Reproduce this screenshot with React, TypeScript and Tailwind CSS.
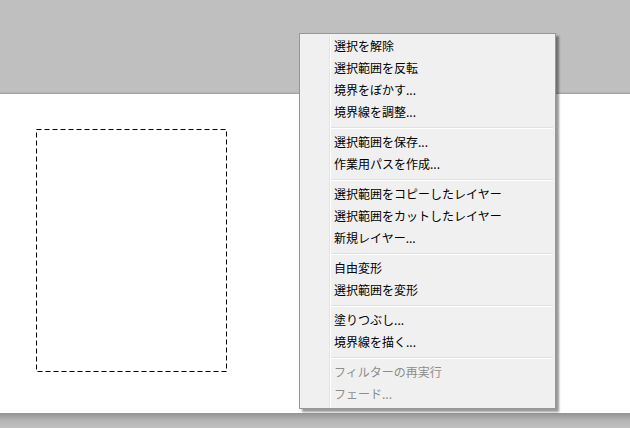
import React from "react";

type Item = { label: string; disabled?: boolean };

const groups: Item[][] = [
  [
    { label: "選択を解除" },
    { label: "選択範囲を反転" },
    { label: "境界をぼかす..." },
    { label: "境界線を調整..." },
  ],
  [{ label: "選択範囲を保存..." }, { label: "作業用パスを作成..." }],
  [
    { label: "選択範囲をコピーしたレイヤー" },
    { label: "選択範囲をカットしたレイヤー" },
    { label: "新規レイヤー..." },
  ],
  [{ label: "自由変形" }, { label: "選択範囲を変形" }],
  [{ label: "塗りつぶし..." }, { label: "境界線を描く..." }],
  [
    { label: "フィルターの再実行", disabled: true },
    { label: "フェード...", disabled: true },
  ],
];

export default function App() {
  return (
    <div
      className="relative w-[630px] h-[428px] overflow-hidden flex flex-col bg-white"
      style={{ fontFamily: '"Noto Sans CJK JP", "Noto Sans", sans-serif' }}
    >
      {/* top gray area */}
      <div className="h-[94px] shrink-0 flex flex-col bg-[#bfbfbf]">
        <div className="flex-1" />
        <div className="h-[1px] bg-[#b3b3b3]" />
        <div className="h-[1px] bg-[#a6a6a6]" />
      </div>

      {/* canvas */}
      <div className="flex-1 pl-[36px] pt-[35px]">
        <svg width="191" height="243" viewBox="0 0 191 243" className="block">
          <rect
            x="0.5"
            y="0.5"
            width="190"
            height="242"
            fill="none"
            stroke="#000"
            strokeWidth="1"
            strokeDasharray="5 3"
          />
        </svg>
      </div>

      {/* bottom gray area */}
      <div className="h-[15px] shrink-0 bg-gradient-to-b from-[#939393] via-[#b5b5b5] to-[#c0c0c0]" />

      {/* context menu */}
      <div className="absolute left-[299px] top-[33px] w-[257px] border border-[#979797] bg-[#f0f0f0] pt-[1px] pb-[3px] px-[2px] shadow-[3px_3px_2px_rgba(0,0,0,0.4)]">
        <div className="absolute left-[29px] top-[1px] bottom-[1px] w-[1px] bg-[#e2e3e3]" />
        <div className="absolute left-[30px] top-[1px] bottom-[1px] w-[1px] bg-white" />
        {groups.map((g, gi) => (
          <div key={gi}>
            {gi > 0 && (
              <div className="h-[8px] flex flex-col pt-[4px] ml-[27px]">
                <div className="h-[1px] bg-[#e0e0e0]" />
                <div className="h-[1px] bg-white" />
              </div>
            )}
            {g.map((it) => (
              <div
                key={it.label}
                className={`relative h-[22px] pl-[32px] text-[12px] leading-[22px] whitespace-nowrap ${
                  it.disabled ? "text-[#8d8d8d]" : "text-[#000000]"
                }`}
              >
                {it.label}
              </div>
            ))}
          </div>
        ))}
      </div>
    </div>
  );
}
